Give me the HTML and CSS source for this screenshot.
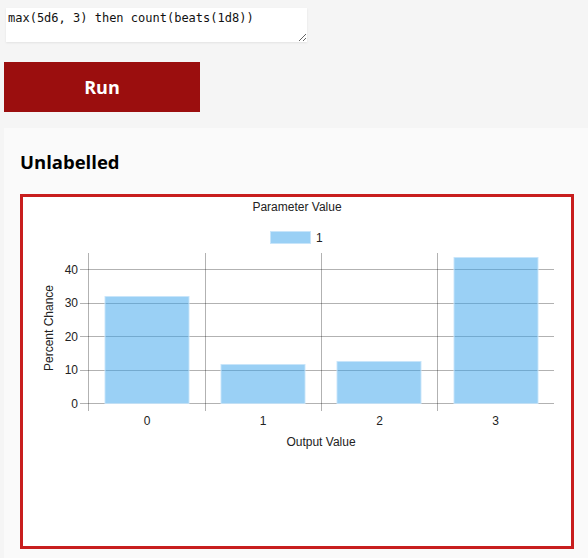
FILE: index.html
```html
<!DOCTYPE html>
<html lang="en">
<head>
    <meta charset="UTF-8">
    <meta name="viewport" content="width=device-width, initial-scale=1.0">
    <title>Dice Roller</title>
    <link rel="stylesheet" href="styles.css">
</head>
<body>
    <div class="editor">
        <textarea class="expr" spellcheck="false">max(5d6, 3) then count(beats(1d8))</textarea>
    </div>
    <button class="run">Run</button>

    <!-- Results -->
    <div class="results">
        <h2 class="result-title">Unlabelled</h2>
        <div class="chart-box">
            <svg class="chart" width="548" height="349" viewBox="23 197 548 349">
                <g class="grid">
                    <line x1="80" y1="269.5" x2="554" y2="269.5"/>
                    <line x1="80" y1="303.5" x2="554" y2="303.5"/>
                    <line x1="80" y1="336.5" x2="554" y2="336.5"/>
                    <line x1="80" y1="370.5" x2="554" y2="370.5"/>
                    <line x1="80" y1="403.5" x2="554" y2="403.5"/>
                    <line x1="88.5" y1="253" x2="88.5" y2="411"/>
                    <line x1="205.5" y1="253" x2="205.5" y2="411"/>
                    <line x1="321.5" y1="253" x2="321.5" y2="411"/>
                    <line x1="437.5" y1="253" x2="437.5" y2="411"/>
                </g>
                <g class="bars">
                    <rect x="105" y="296.5" width="84" height="107"/>
                    <rect x="221" y="364.5" width="84" height="39"/>
                    <rect x="337" y="361.5" width="84" height="42"/>
                    <rect x="454" y="257.5" width="84" height="146"/>
                </g>
                <g class="labels">
                    <text class="title" x="297" y="211" text-anchor="middle">Parameter Value</text>
                    <rect class="legend-box" x="270.5" y="231.5" width="40" height="12"/>
                    <text x="316" y="242">1</text>

                    <text x="78" y="274" text-anchor="end">40</text>
                    <text x="78" y="307" text-anchor="end">30</text>
                    <text x="78" y="341" text-anchor="end">20</text>
                    <text x="78" y="374" text-anchor="end">10</text>
                    <text x="78" y="408" text-anchor="end">0</text>

                    <text x="147" y="425" text-anchor="middle">0</text>
                    <text x="263" y="425" text-anchor="middle">1</text>
                    <text x="379.5" y="425" text-anchor="middle">2</text>
                    <text x="495.5" y="425" text-anchor="middle">3</text>

                    <text x="321" y="445.5" text-anchor="middle">Output Value</text>
                    <text x="53" y="328" text-anchor="middle" transform="rotate(-90 53 328)">Percent Chance</text>
                </g>
            </svg>
        </div>
    </div>
</body>
</html>
```

FILE: styles.css
```css
body {
    margin: 0;
    background-color: #f5f5f5;
    font-family: "Open Sans", sans-serif;
    overflow: hidden;
}
.editor {
    padding: 8px 0 0 6px;
}
.expr {
    display: block;
    width: 301px;
    height: 34px;
    box-sizing: border-box;
    margin: 0;
    padding: 3px 2px;
    border: none;
    background-color: #fff;
    box-shadow: 0 1px 2px rgba(0, 0, 0, 0.08);
    font-family: "DejaVu Sans Mono", monospace;
    font-size: 12px;
    color: #111;
}
.run {
    display: block;
    margin: 20px 0 0 4px;
    width: 196px;
    height: 50px;
    border: none;
    background-color: #9b0e0e;
    color: #fff;
    font-family: "Open Sans", sans-serif;
    font-size: 18px;
    font-weight: bold;
    cursor: pointer;
}
.results {
    margin: 16px 0 0 4px;
    padding: 20px 14px 20px 16px;
    background-color: #fafafa;
}
.result-title {
    margin: 0 0 19px 0;
    font-size: 18.5px;
    line-height: 27px;
    font-weight: bold;
    color: #000;
}
.chart-box {
    width: 548px;
    height: 349px;
    border: 3px solid #c81e1e;
    background-color: #fff;
}
.chart {
    display: block;
}
.grid line {
    stroke: rgba(0, 0, 0, 0.3);
    stroke-width: 1;
}
.bars rect {
    fill: rgba(54, 162, 235, 0.5);
    stroke: rgba(200, 228, 250, 0.9);
    stroke-width: 1;
}
.legend-box {
    fill: rgba(54, 162, 235, 0.5);
    stroke: rgba(200, 228, 250, 0.9);
}
.labels text {
    font-family: "Liberation Sans", Arial, sans-serif;
    font-size: 12px;
    fill: #222;
}
```
